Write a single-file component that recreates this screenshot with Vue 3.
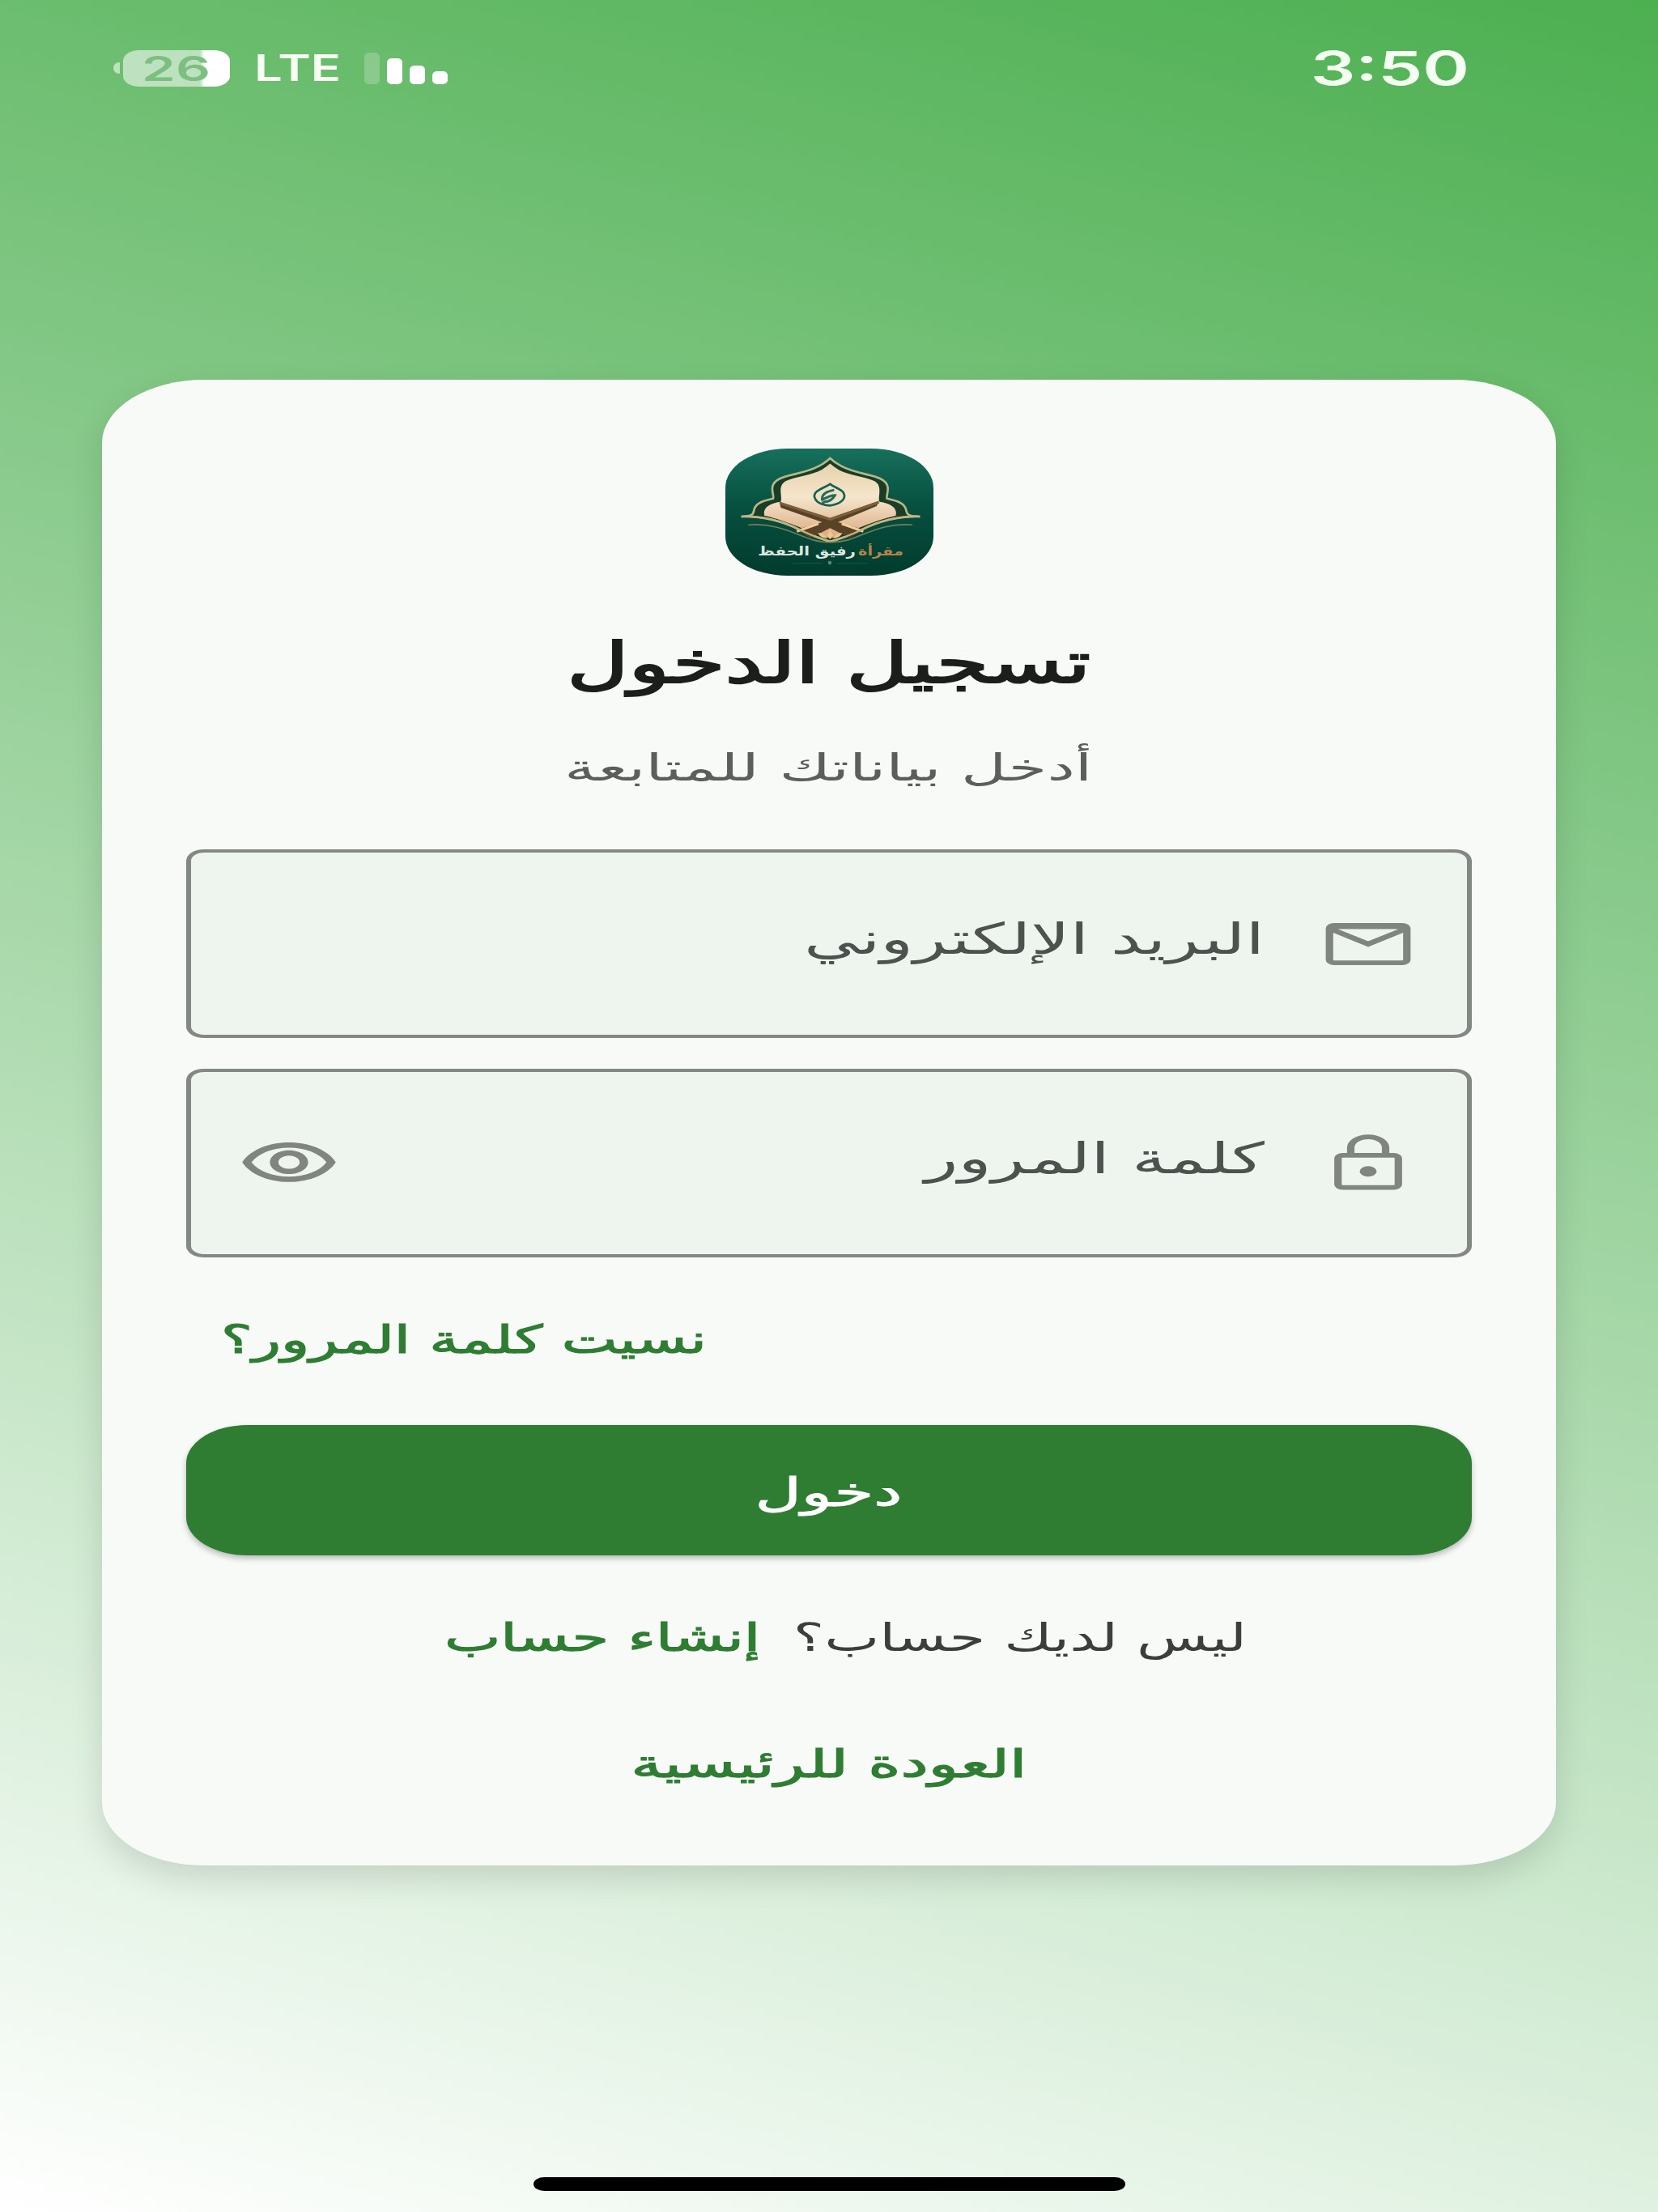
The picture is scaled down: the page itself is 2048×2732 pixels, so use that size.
<script setup>
import { ref } from 'vue'

const email = ref('البريد الإلكتروني')
const password = ref('كلمة المرور')
const bars = [
  { h: 39, dim: true },
  { h: 32 },
  { h: 23 },
  { h: 16 },
]
</script>

<template>
  <div class="screen" dir="rtl">
    <header class="status">
      <span class="time">3:50</span>
      <div class="indicators" dir="ltr">
        <i class="nub"></i>
        <div class="battery"><span class="level">26</span></div>
        <span class="network">LTE</span>
        <div class="signal">
          <i v-for="(b, n) in bars" :key="n" :class="{ dim: b.dim }" :style="{ height: b.h + 'px' }"></i>
        </div>
      </div>
    </header>

    <main class="card">
      <svg class="logo" viewBox="45 42 771 473" preserveAspectRatio="none">
        <defs>
          <linearGradient id="tile" x1="0" y1="0" x2="0" y2="1">
            <stop offset="0" stop-color="#17705c" />
            <stop offset=".45" stop-color="#07503f" />
            <stop offset="1" stop-color="#013b2e" />
          </linearGradient>
          <linearGradient id="arch" x1="0" y1="0" x2="0" y2="1">
            <stop offset="0" stop-color="#e8d2ac" />
            <stop offset=".45" stop-color="#f5e5cb" />
            <stop offset="1" stop-color="#dba981" />
          </linearGradient>
        </defs>
        <rect x="45" y="42" width="771" height="473" rx="230" ry="145" fill="url(#tile)" />
        <path d="M104 295C150 295 148 285 152 268C158 245 185 236 222 228C228 215 200 178 245 155C275 138 340 135 390 108Q415 95 433 78Q451 95 476 108C526 135 591 138 621 155C666 178 638 215 644 228C681 236 708 245 714 268C718 285 716 295 766 295C675 293 610 314 550 344C500 368 465 380 433 388C405 380 370 368 320 344C260 314 195 293 104 295Z" fill="#1b3d25" stroke="#b3b98b" stroke-width="8" />
        <path d="M190 292C182 265 205 246 250 240C258 222 236 182 268 163C305 146 370 140 400 122Q420 110 433 98Q446 110 466 122C496 140 561 146 598 163C630 182 608 222 616 240C661 246 684 265 676 292C610 305 540 340 433 376C326 340 256 305 190 292Z" fill="url(#arch)" />
        <path d="M246 240L433 300L614 236L606 256L462 316L560 344L505 374L433 338L361 374L306 344L404 316L250 262Z" fill="#594225" />
        <path d="M246 244L433 306L614 242" fill="none" stroke="#7c603b" stroke-width="9" />
        <path d="M310 350L390 322M556 350L476 322" stroke="#efd09e" stroke-width="9" />
        <path d="M433 174C405 192 370 200 375 222C380 243 405 252 432 254C462 250 488 236 486 216C485 196 455 190 433 174Z" fill="#eee2c6" stroke="#17604f" stroke-width="8" />
        <path d="M448 196Q400 205 404 232Q438 215 451 216Q438 240 412 240L399 250" fill="none" stroke="#24695a" stroke-width="9" />
        <path d="M104 295C195 293 260 314 320 344C370 368 405 380 433 388C465 380 500 368 550 344C610 314 675 293 766 295" fill="none" stroke="#c6b382" stroke-width="7" />
        <path d="M130 326C235 318 300 360 370 382Q433 400 500 382C570 360 630 318 738 326" fill="none" stroke="#70825b" stroke-width="5" />
        <path d="M433 344L444 366L433 380L422 366ZM388 356Q410 356 424 376Q396 376 388 356ZM478 356Q456 356 442 376Q470 376 478 356Z" fill="#ecc88b" />
        <g font-family="DejaVu Sans, sans-serif" font-weight="700" direction="rtl" font-size="46">
          <text x="705" y="440" textLength="168" lengthAdjust="spacingAndGlyphs" fill="#b4834c">مقرأة</text>
          <text x="528" y="440" textLength="362" lengthAdjust="spacingAndGlyphs" fill="#dce5df">رفيق الحفظ</text>
        </g>
        <path d="M290 469H405M458 469H570" stroke="#17584a" stroke-width="3" />
        <circle cx="432" cy="467" r="7" fill="#52877a" />
      </svg>

      <h1><span>تسجيل الدخول</span></h1>
      <p class="subtitle"><span>أدخل بياناتك للمتابعة</span></p>

      <div class="field">
        <svg class="icon line" viewBox="0 0 24 24" preserveAspectRatio="none">
          <rect x="2.9" y="4.9" width="18.2" height="14.2" rx="1.1" />
          <path d="M3 5.4H21M3.2 6.3L12 12L20.8 6.3" />
        </svg>
        <span class="label email">{{ email }}</span>
      </div>
      <div class="field second">
        <svg class="icon line" viewBox="0 0 24 24" preserveAspectRatio="none">
          <rect x="4.9" y="8.9" width="14.2" height="12.2" rx="1.1" />
          <path d="M7.9 8.5V6a4.1 4.1 0 0 1 8.2 0V8.5" />
          <circle class="dot" cx="12" cy="15" r="2" />
        </svg>
        <span class="label password">{{ password }}</span>
        <svg class="icon" viewBox="0 0 24 24" preserveAspectRatio="none"><path d="M12 6c3.79 0 7.17 2.13 8.82 5.5C19.17 14.87 15.79 17 12 17s-7.17-2.13-8.82-5.5C4.83 8.13 8.21 6 12 6m0-2C7 4 2.73 7.11 1 11.5 2.73 15.89 7 19 12 19s9.27-3.11 11-7.5C21.27 7.11 17 4 12 4zm0 5c1.38 0 2.5 1.12 2.5 2.5S13.38 14 12 14s-2.5-1.12-2.5-2.5S10.62 9 12 9m0-2c-2.48 0-4.5 2.02-4.5 4.5S9.52 16 12 16s4.5-2.02 4.5-4.5S14.48 7 12 7z" /></svg>
      </div>

      <a class="forgot"><span>نسيت كلمة المرور؟</span></a>
      <button class="submit"><span>دخول</span></button>
      <div class="signup">
        <span class="question">ليس لديك حساب؟</span>
        <a class="create">إنشاء حساب</a>
      </div>
      <a class="back"><span>العودة للرئيسية</span></a>
    </main>

    <div class="home"></div>
  </div>
</template>

<style>
body {
  margin: 0;
}
</style>

<style scoped>
.screen {
  width: 2048px;
  height: 2732px;
  box-sizing: border-box;
  overflow: hidden;
  display: flex;
  flex-direction: column;
  align-items: center;
  background: linear-gradient(195.9deg, #4caf50, #fff);
  font-family: "DejaVu Sans", sans-serif;
}
.screen span,
.create {
  display: inline-block;
  white-space: nowrap;
}

/* status bar */
.status {
  width: 100%;
  height: 469px;
  flex: none;
  box-sizing: border-box;
  padding: 54px 233px 0 140px;
  display: flex;
  justify-content: space-between;
  align-items: flex-start;
  font-family: Inter, sans-serif;
  font-weight: 600;
  color: #fff;
}
.time {
  font-size: 58px;
  line-height: 60px;
  transform: scaleX(1.51);
  transform-origin: right;
  color: #f3fff0;
}
.indicators {
  display: flex;
  align-items: center;
  height: 60px;
}
.nub {
  width: 8px;
  height: 14px;
  border-radius: 8px 0 0 8px;
  margin-right: 4px;
  background: rgba(255, 255, 255, .55);
}
.battery {
  width: 132px;
  height: 45px;
  border-radius: 20px / 13px;
  background: linear-gradient(90deg, rgba(255, 255, 255, .55) 72%, #fff 76%);
  text-align: center;
}
.level {
  font-size: 42px;
  line-height: 46px;
  transform: scaleX(1.6);
  color: #7cbf80;
}
.network {
  width: 78px;
  margin-left: 30px;
  font-size: 45px;
  line-height: 60px;
  transform: scaleX(1.37);
  transform-origin: left;
  color: #f6fff2;
}
.signal {
  display: flex;
  align-items: flex-end;
  gap: 9px;
  height: 40px;
  margin-left: 58px;
}
.signal i {
  width: 19px;
  border-radius: 6px / 5px;
  background: #fff;
}
.signal .dim {
  background: rgba(255, 255, 255, .22);
}

/* login card */
.card {
  width: 1796px;
  height: 1835px;
  flex: none;
  box-sizing: border-box;
  padding: 85px 104px 0;
  display: flex;
  flex-direction: column;
  align-items: center;
  border-radius: 126px / 78px;
  background: #f8faf8;
  box-shadow: 0 16px 40px rgba(0, 0, 0, .13);
}
.logo {
  width: 257px;
  height: 157px;
  display: block;
}
h1 {
  margin: 58px 0 0;
  font-size: 70px;
  line-height: 100px;
  font-weight: 400;
  color: #1c1e1c;
  -webkit-text-stroke: 2.2px #1c1e1c;
}
h1 span {
  transform: scaleX(1.5);
}
.subtitle {
  margin: 44px 0 0;
  font-size: 46px;
  line-height: 70px;
  color: #5c5e5c;
}
.subtitle span {
  transform: translateX(-1px) scaleX(1.68);
}
.field {
  width: 1588px;
  height: 233px;
  flex: none;
  margin-top: 66px;
  box-sizing: border-box;
  border: solid #848884;
  border-width: 4px 6px;
  border-radius: 22px / 14px;
  background: #eef4ee;
  padding: 0 59px 0 58px;
  display: flex;
  align-items: center;
}
.second {
  margin-top: 38px;
}
.icon {
  width: 126px;
  height: 78px;
  flex: none;
  fill: #808580;
}
.line {
  fill: none;
  stroke: #808580;
  stroke-width: 1.75;
}
.dot {
  fill: #808580;
  stroke: none;
}
.label {
  flex: 1;
  margin-right: 65px;
  padding-bottom: 12px;
  font-size: 53px;
  line-height: 70px;
  transform-origin: right;
  color: #4d524e;
}
.email {
  transform: scaleX(1.6);
}
.password {
  transform: scaleX(1.61);
}
.forgot {
  align-self: flex-end;
  margin: 66px 0 0;
  padding-left: 43px;
}
.forgot span {
  transform: scaleX(1.52);
  transform-origin: left;
}
.forgot,
.create,
.back {
  font-size: 48px;
  line-height: 70px;
  color: #2f7d33;
  -webkit-text-stroke: 1.2px #2f7d33;
}
.submit {
  width: 1588px;
  height: 161px;
  flex: none;
  margin-top: 71px;
  padding: 7px 0 0;
  border: 0;
  border-radius: 76px / 47px;
  background: #2e7d32;
  box-shadow: 0 4px 7px rgba(0, 0, 0, .25);
  font: 49px/70px "DejaVu Sans", sans-serif;
  color: #fff;
  -webkit-text-stroke: 1px #fff;
}
.submit span {
  transform: scaleX(1.61);
}
.signup {
  width: 1588px;
  margin-top: 66px;
  display: flex;
  box-sizing: border-box;
  padding-right: 278px;
}
.question {
  width: 601px;
  font-size: 48px;
  line-height: 70px;
  transform: scaleX(1.505);
  transform-origin: right;
  color: #3c3e3c;
}
.create {
  transform: scaleX(1.535);
  transform-origin: right;
}
.back {
  margin-top: 86px;
}
.back span {
  transform: scaleX(1.6);
}

/* home indicator */
.home {
  width: 731px;
  height: 17px;
  margin-top: 385px;
  border-radius: 14px / 9px;
  background: #000;
}
</style>
